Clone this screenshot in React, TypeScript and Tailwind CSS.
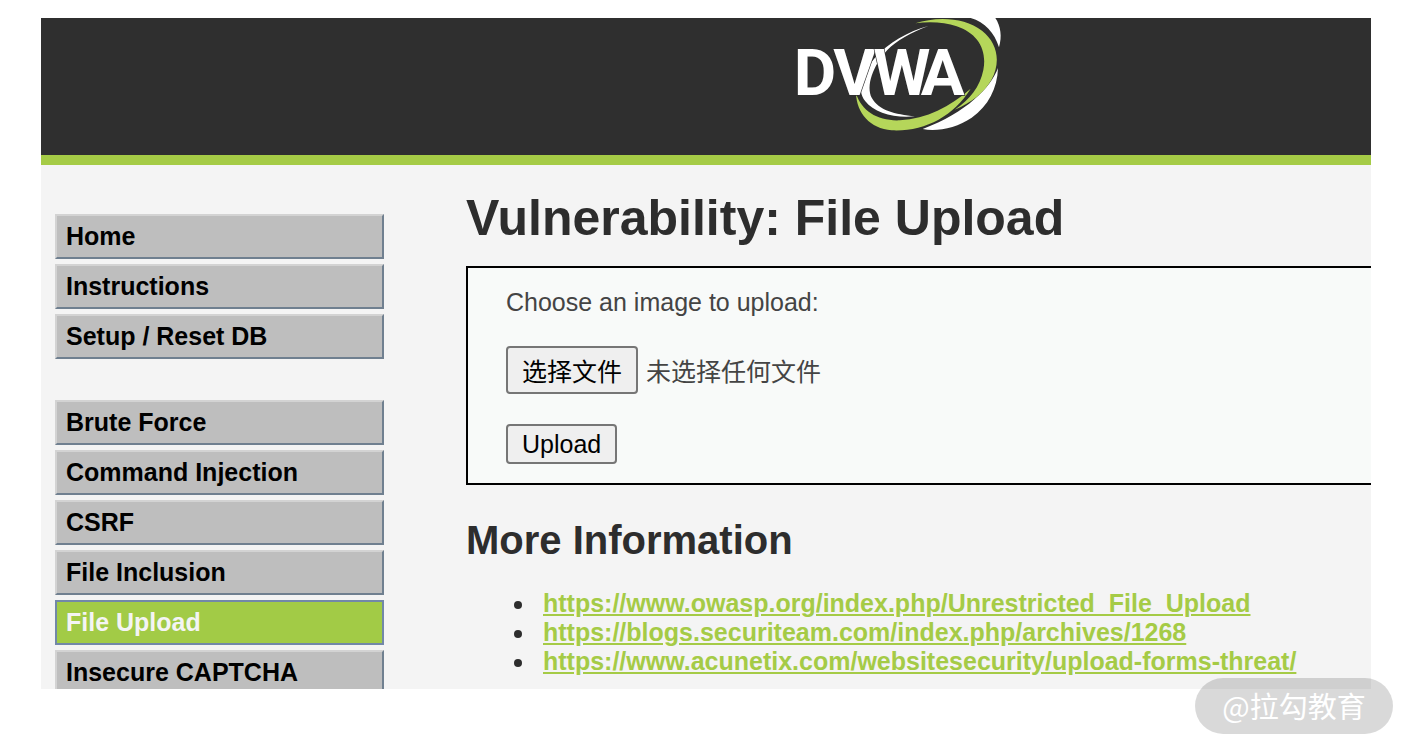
import { useRef, useState } from "react";
import clsx from "clsx";

const menuGroups = [
  ["Home", "Instructions", "Setup / Reset DB"],
  [
    "Brute Force",
    "Command Injection",
    "CSRF",
    "File Inclusion",
    "File Upload",
    "Insecure CAPTCHA",
  ],
];

const links = [
  "https://www.owasp.org/index.php/Unrestricted_File_Upload",
  "https://blogs.securiteam.com/index.php/archives/1268",
  "https://www.acunetix.com/websitesecurity/upload-forms-threat/",
];

const Logo = () => (
  <svg
    viewBox="24 24 648 342"
    className="h-[114px] w-[216px] shrink-0"
    role="img"
    aria-label="DVWA"
  >
    {/* white swooshes */}
    <path
      d="M445 48 C385 64 325 98 285 143 C245 190 228 235 256 274 C282 308 345 326 405 319 C345 314 295 300 276 265 C256 228 280 165 322 120 C350 92 392 68 445 48Z"
      fill="#fff"
    />
    <path
      d="M572 24 C615 36 643 68 657 112 C667 80 662 48 646 24Z"
      fill="#fff"
    />
    <path
      d="M654 174 C632 232 560 308 428 357 C470 366 530 354 575 323 C625 288 652 235 654 174Z"
      fill="#fff"
    />
    {/* green swooshes */}
    <path
      d="M406 40 C470 18 555 22 606 62 C652 98 664 155 634 210 C612 248 575 278 524 299 C570 268 600 230 610 180 C622 118 592 70 530 49 C495 37 450 33 406 40Z"
      fill="#b5d65a"
    />
    <path
      d="M228 250 C230 310 270 356 335 361 C430 366 520 320 572 236 C510 290 440 326 360 331 C295 334 245 305 228 250Z"
      fill="#b5d65a"
    />
    {/* the letters overlap, each one outlined against its neighbour */}
    <text
      x="41 160 280 422"
      y="254"
      fontSize="196"
      fontWeight="700"
      fill="#fff"
      stroke="#2f2f2f"
      strokeWidth="4"
      paintOrder="stroke"
      className="font-['Roboto',sans-serif]"
    >
      DVWA
    </text>
  </svg>
);

const SideMenu = () => (
  <nav className="flex w-[329px] shrink-0 flex-col gap-[41px]">
    {menuGroups.map((group, i) => (
      <ul key={i} className="flex flex-col gap-[5px]">
        {group.map((item) => (
          <li key={item}>
            <a
              href="#"
              className={clsx(
                "block h-[45px] border-2 px-[9px] leading-[41px] font-bold",
                item === "File Upload"
                  ? "border-[#7288a8] bg-[#a2cb46] text-[#f4f4f4]"
                  : "border-t-[#d3d3d3] border-r-[#708090] border-b-[#708090] border-l-[#d3d3d3] bg-[#bebebe] text-black"
              )}
            >
              {item}
            </a>
          </li>
        ))}
      </ul>
    ))}
  </nav>
);

const UploadForm = () => {
  const inputRef = useRef<HTMLInputElement>(null);
  const [fileName, setFileName] = useState("未选择任何文件");

  return (
    <form
      onSubmit={(e) => e.preventDefault()}
      className="flex flex-col items-start border-y-2 border-l-2 border-black bg-[#f8faf9] pt-5 pb-[19px] pl-[38px] text-[#444]"
    >
      <label htmlFor="uploaded">Choose an image to upload:</label>
      <div className="mt-[29px] flex items-center gap-2">
        <input
          ref={inputRef}
          id="uploaded"
          type="file"
          className="hidden"
          onChange={(e) =>
            setFileName(e.target.files?.[0]?.name ?? "未选择任何文件")
          }
        />
        <button
          type="button"
          onClick={() => inputRef.current?.click()}
          className="h-12 rounded-[4px] border-2 border-[#767676] bg-[#efefef] px-[14px] pt-1 text-black"
        >
          选择文件
        </button>
        <span className="pt-1">{fileName}</span>
      </div>
      <button
        type="submit"
        className="mt-[30px] h-10 rounded-[4px] border-2 border-[#767676] bg-[#efefef] px-[14px] text-black"
      >
        Upload
      </button>
    </form>
  );
};

export default function App() {
  return (
    <div className="relative flex h-screen flex-col bg-white px-[41px] pt-[18px] pb-[63px] font-['Liberation_Sans','Noto_Sans_CJK_SC',sans-serif] text-[25px] leading-[29px]">
      <div className="min-h-0 flex-1 overflow-hidden bg-[#f4f4f4]">
        <header className="flex h-[147px] items-start border-b-[10px] border-[#a5cb46] bg-[#2f2f2f] pl-[747px]">
          <Logo />
        </header>

        <div className="flex gap-[82px] pl-[14px]">
          <div className="pt-[49px]">
            <SideMenu />
          </div>

          <main className="min-w-0 flex-1 pt-6 text-[#2d2d2d]">
            <h1 className="mb-[19px] text-[50px] leading-[58px] font-bold">
              Vulnerability: File Upload
            </h1>
            <UploadForm />
            <h2 className="mt-8 mb-[26px] text-[40px] leading-[46px] font-bold">
              More Information
            </h2>
            <ul className="list-disc pl-[70px]">
              {links.map((link) => (
                <li key={link} className="pl-[7px]">
                  <a href={link} className="font-bold text-[#a5cb46] underline">
                    {link}
                  </a>
                </li>
              ))}
            </ul>
          </main>
        </div>
      </div>

      {/* Watermark */}
      <div className="absolute right-[19px] bottom-[18px] flex h-14 w-[198px] items-center justify-center rounded-full bg-black/15 pb-0.5 font-['Noto_Sans_CJK_SC',sans-serif] text-[29px] text-white">
        @拉勾教育
      </div>
    </div>
  );
}
